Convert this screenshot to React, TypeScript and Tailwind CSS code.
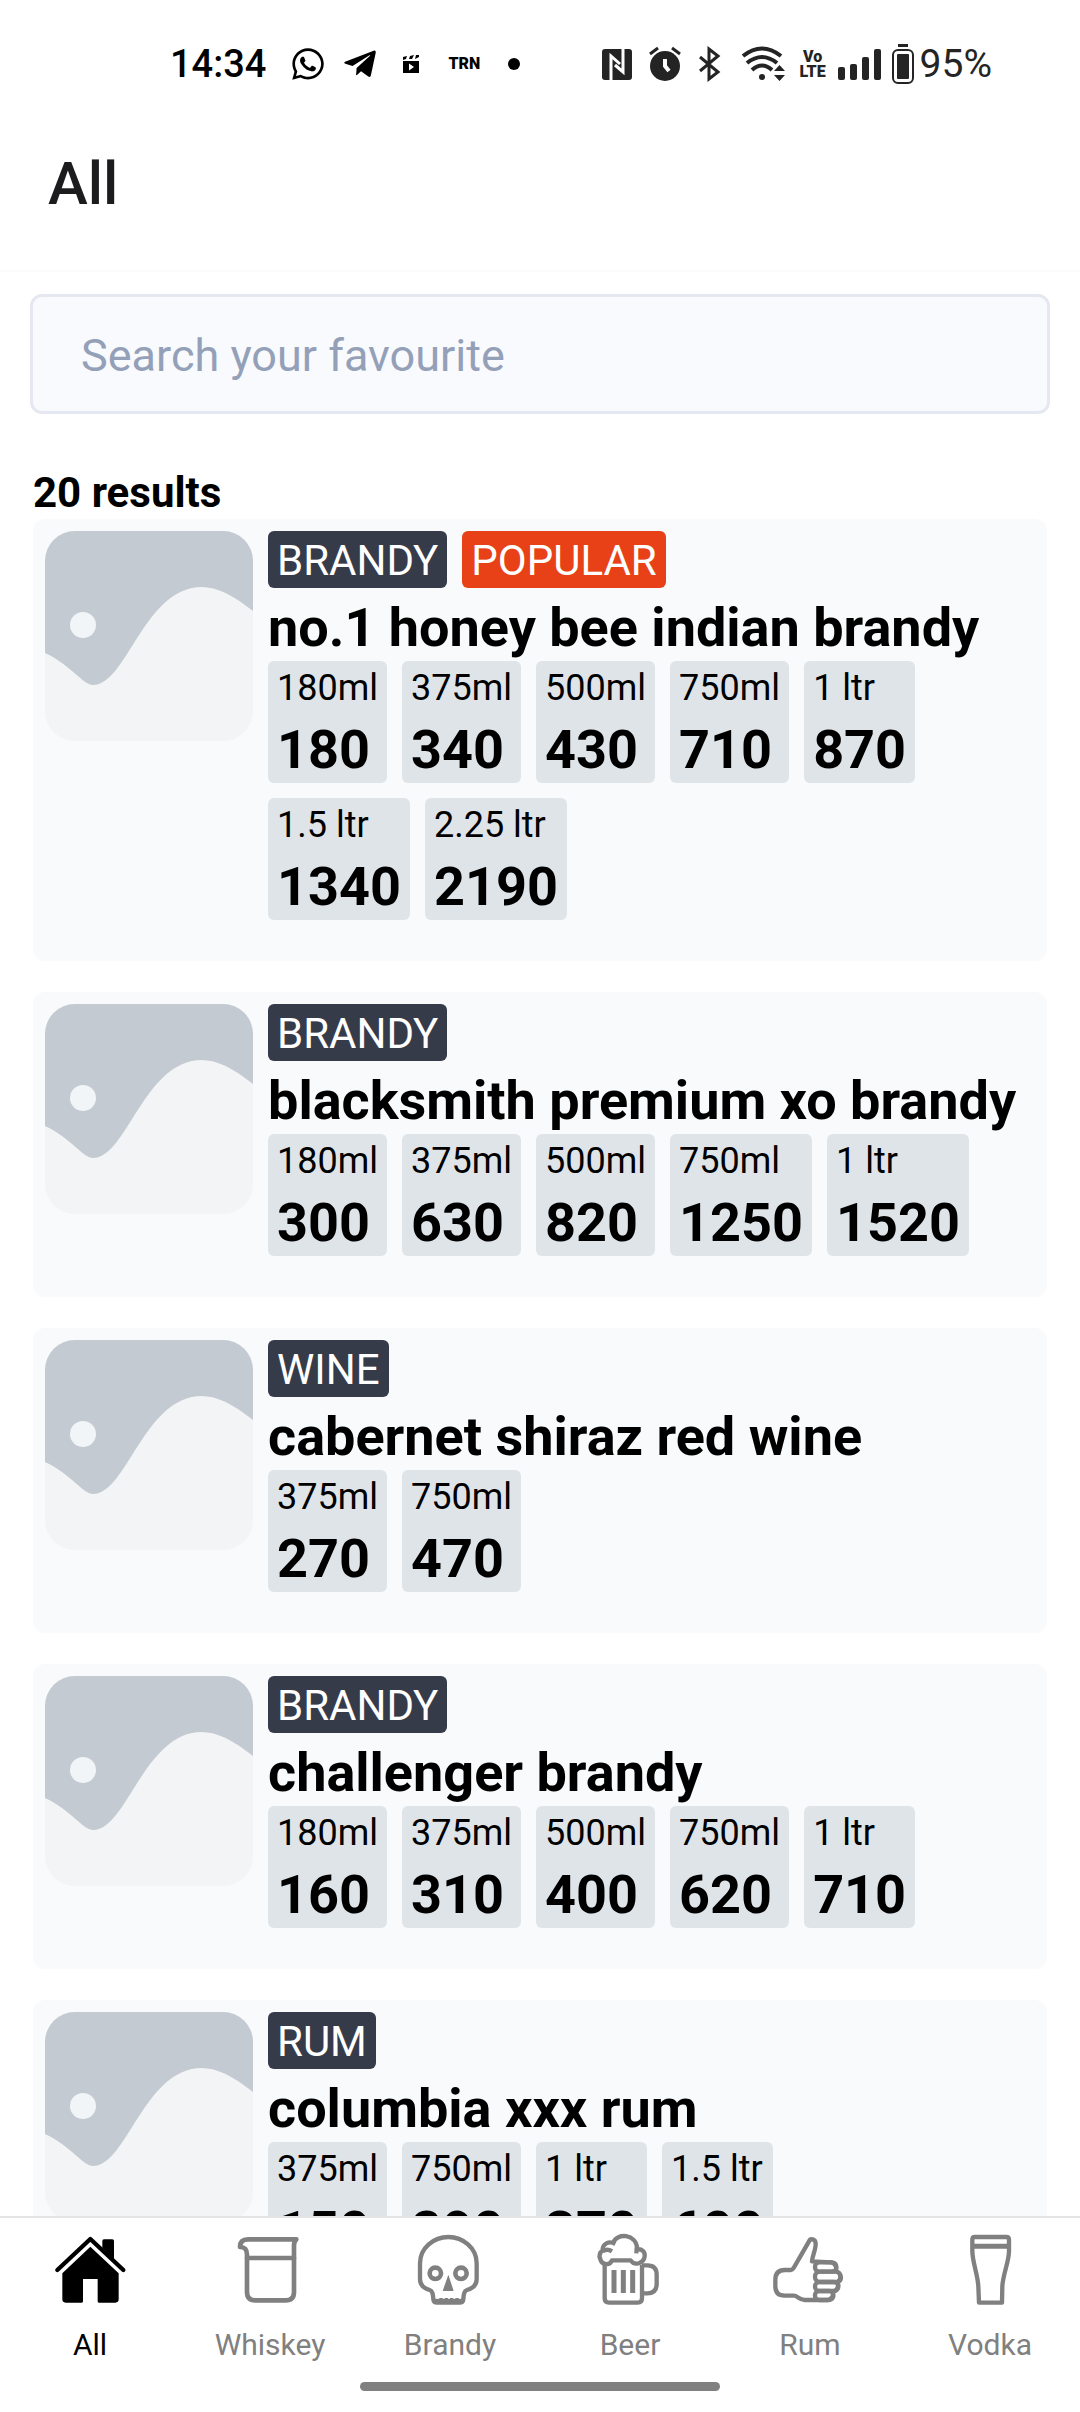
import { FaTelegramPlane, FaWhatsapp } from "react-icons/fa";

type Size = { label: string; price: number };

type Drink = {
  name: string;
  category: string;
  popular?: boolean;
  sizes: Size[];
};

const DRINKS: Drink[] = [
  {
    name: "no.1 honey bee indian brandy",
    category: "BRANDY",
    popular: true,
    sizes: [
      { label: "180ml", price: 180 },
      { label: "375ml", price: 340 },
      { label: "500ml", price: 430 },
      { label: "750ml", price: 710 },
      { label: "1 ltr", price: 870 },
      { label: "1.5 ltr", price: 1340 },
      { label: "2.25 ltr", price: 2190 },
    ],
  },
  {
    name: "blacksmith premium xo brandy",
    category: "BRANDY",
    sizes: [
      { label: "180ml", price: 300 },
      { label: "375ml", price: 630 },
      { label: "500ml", price: 820 },
      { label: "750ml", price: 1250 },
      { label: "1 ltr", price: 1520 },
    ],
  },
  {
    name: "cabernet shiraz red wine",
    category: "WINE",
    sizes: [
      { label: "375ml", price: 270 },
      { label: "750ml", price: 470 },
    ],
  },
  {
    name: "challenger brandy",
    category: "BRANDY",
    sizes: [
      { label: "180ml", price: 160 },
      { label: "375ml", price: 310 },
      { label: "500ml", price: 400 },
      { label: "750ml", price: 620 },
      { label: "1 ltr", price: 710 },
    ],
  },
  {
    name: "columbia xxx rum",
    category: "RUM",
    sizes: [
      { label: "375ml", price: 150 },
      { label: "750ml", price: 290 },
      { label: "1 ltr", price: 370 },
      { label: "1.5 ltr", price: 600 },
    ],
  },
];

function HomeIcon() {
  return (
    <svg viewBox="0 0 240 228" className="h-[76px] w-20" fill="currentColor">
      <path d="M22 114 121 21 220 114" fill="none" stroke="currentColor" strokeWidth="13" strokeLinecap="round" strokeLinejoin="round" />
      <path d="M157 47V27q0-5 5-5h25q5 0 5 5v57Z" />
      <path d="M121 44 206 124V202q0 10-10 10H147q-4 0-4-4V141H99v67q0 4-4 4H47q-10 0-10-10V124Z" />
    </svg>
  );
}

function WhiskeyIcon() {
  return (
    <svg viewBox="0 0 240 228" className="h-[76px] w-20" fill="none" stroke="currentColor" strokeWidth="14" strokeLinejoin="round" strokeLinecap="round">
      <path d="M30 45C30 28 40 22 54 22H199C194 26 192 31 192 40V180Q192 205 167 205H76Q51 205 51 180V68C51 52 45 45 30 45Z" />
      <path d="M51 78H192" />
    </svg>
  );
}

function BrandyIcon() {
  return (
    <svg viewBox="0 0 240 228" className="h-[76px] w-20" fill="none" stroke="currentColor" strokeWidth="13" strokeLinejoin="round">
      <path d="M115 15C71 15 30 48 30 94V141C30 162 45 170 59 174C69 177 69 190 70 202Q71 212 81 212H149Q159 212 160 202C161 190 161 177 171 174C185 170 200 162 200 141V94C200 48 159 15 115 15Z" />
      <circle cx="76" cy="124" r="17" strokeWidth="14" />
      <circle cx="153" cy="124" r="17" strokeWidth="14" />
      <path d="M115 128 131 177H98Z" fill="currentColor" stroke="none" />
      <path d="M74 207H156" />
      <path d="M93 198V211M109 198V211M125 198V211M141 198V211" strokeWidth="10" />
    </svg>
  );
}

function BeerIcon() {
  return (
    <svg viewBox="0 0 240 228" className="h-[76px] w-20" fill="none" stroke="currentColor" strokeWidth="13" strokeLinejoin="round">
      <path d="M44 98V199Q44 212 57 212H143Q156 212 156 199V98" />
      <path d="M156 100H172Q200 100 200 128V156Q200 184 172 184H156" />
      <path d="M72 114V183M100 114V183M128 114V183" strokeWidth="15" />
      <path d="M76 36C57 25 36 35 38 56C28 62 27 72 31 82C36 99 60 102 66 85H122C134 103 161 94 164 73C166 59 155 50 142 52C139 3 80 3 70 31" />
      <path d="M38 58C46 52 57 52 66 58" />
      <path d="M140 47 139 64" />
    </svg>
  );
}

function RumIcon() {
  return (
    <svg viewBox="0 0 240 228" className="h-[76px] w-20" fill="none" stroke="currentColor" strokeWidth="13" strokeLinejoin="round">
      <path d="M130 204H104C88 204 82 191 72 191H44Q16 191 16 163V144Q16 114 44 114H63C68 114 69 111 72 106L117 28C121 18 137 20 137 36C137 54 127 72 126 88L184 91C201 94 200 114 196 116C218 124 216 148 203 150C207 162 202 176 190 178C190 194 184 204 172 204Z" />
      <rect x="135" y="91" width="64" height="28" rx="13" />
      <rect x="135" y="119" width="76" height="31" rx="15" />
      <rect x="135" y="150" width="70" height="27" rx="13" />
      <rect x="135" y="177" width="55" height="27" rx="12" />
    </svg>
  );
}

function VodkaIcon() {
  return (
    <svg viewBox="0 0 240 228" className="h-[76px] w-20" fill="none" stroke="currentColor" strokeWidth="13" strokeLinejoin="round">
      <path d="M74 15H169Q177 15 177 23V58C177 90 159 125 157 163L156 212H87L85 163C83 125 67 90 67 58V23Q67 15 74 15Z" />
      <path d="M67 43H177" strokeWidth="15" />
    </svg>
  );
}

const TABS = [
  { label: "All", Icon: HomeIcon },
  { label: "Whiskey", Icon: WhiskeyIcon },
  { label: "Brandy", Icon: BrandyIcon },
  { label: "Beer", Icon: BeerIcon },
  { label: "Rum", Icon: RumIcon },
  { label: "Vodka", Icon: VodkaIcon },
];

function StatusBar() {
  return (
    <div className="flex h-32 shrink-0 items-center justify-between pl-[170px] pr-[88px] text-[39px] leading-none">
      <div className="flex items-center text-black">
        <span className="text-[38px] font-medium">14:34</span>
        <FaWhatsapp className="ml-6 size-9" />
        <FaTelegramPlane className="ml-4 size-9" />
        <svg viewBox="0 0 18 18" className="ml-6 size-[18px]" fill="currentColor">
          <path d="M1 2 5 1 4 4 1 5ZM8 1l4-1-2 4H7ZM14 0l3-1v3l-4 2Z" />
          <path fillRule="evenodd" d="M1 6H17V18H1ZM7 8.500V15.500L12 12Z" />
        </svg>
        <span className="ml-7 text-[16px] font-black">TRN</span>
        <span className="ml-7 size-3 rounded-full bg-black" />
      </div>

      <div className="flex items-center text-[#242424]">
        <svg viewBox="0 0 30 32" className="h-8 w-[30px]">
          <rect y="1" width="30" height="31" rx="3" fill="currentColor" />
          <path d="M9 32V8L18 16M21 1V24L13 17" fill="none" stroke="#fff" strokeWidth="3" />
        </svg>
        <svg viewBox="0 0 32 36" className="ml-[17px] h-9 w-8" fill="none" stroke="currentColor">
          <circle cx="16" cy="20" r="15" fill="currentColor" stroke="none" />
          <path d="M1 8 9 2M31 8 23 2" strokeWidth="3" />
          <path d="M16 13V20L20 25" stroke="#fff" strokeWidth="4" />
        </svg>
        <svg viewBox="0 0 22 36" className="ml-[18px] h-9 w-[22px]" fill="none" stroke="currentColor" strokeWidth="3">
          <path d="M1 11 19 26 10 33V3L19 10 1 25" />
        </svg>
        <svg viewBox="0 0 44 36" className="ml-5 h-9 w-11" fill="none" stroke="currentColor" strokeWidth="4">
          <path d="M2 10Q21-5 40 10M6 17Q21 5 36 17M11 24Q21 15 31 24" />
          <circle cx="21" cy="31" r="3" fill="currentColor" stroke="none" />
          <path d="M33 25H44L38.500 19ZM33 29H44L38.500 35Z" fill="currentColor" stroke="none" />
        </svg>
        <span className="ml-3.5 flex flex-col items-center text-[16px] font-black leading-[15px]">
          <span>Vo</span>
          <span>LTE</span>
        </span>
        <svg viewBox="0 0 44 32" className="ml-3 h-8 w-11" fill="currentColor">
          <rect y="19" width="7" height="13" rx="2" />
          <rect x="12" y="16" width="7" height="16" rx="2" />
          <rect x="24" y="9" width="7" height="23" rx="2" />
          <rect x="36" y="1" width="7" height="31" rx="2" />
        </svg>
        <svg viewBox="0 0 22 40" className="ml-[10px] h-10 w-[22px]" fill="currentColor">
          <rect x="6" width="10" height="3" />
          <rect x="1" y="6" width="20" height="33" rx="5" fill="none" stroke="currentColor" strokeWidth="2" />
          <rect x="5" y="10" width="12" height="25" rx="1" />
        </svg>
        <span className="ml-1.5">95%</span>
      </div>
    </div>
  );
}

function Placeholder() {
  return (
    <svg viewBox="0 0 208 210" className="h-[210px] w-[208px] shrink-0 rounded-[30px]">
      <rect width="208" height="210" fill="#f2f4f6" />
      <path d="M0 0H208V80C188 64 172 56 157 56C99 56 82 154 48 154C38 154 26 134 0 122Z" fill="#c3cad1" />
      <circle cx="38" cy="94" r="13" fill="#f2f5f8" />
    </svg>
  );
}

function DrinkCard({ drink }: { drink: Drink }) {
  return (
    <li className="flex shrink-0 gap-[15px] rounded-xl bg-[#f8fafb] px-3 pt-3 pb-[41px]">
      <Placeholder />
      <div className="min-w-0 flex-1">
        <div className="flex gap-[15px] text-[42px] leading-[49px] text-white">
          <span className="rounded-md bg-[#363b4a] px-[9px] pt-[5px] pb-[3px]">{drink.category}</span>
          {drink.popular && (
            <span className="rounded-md bg-[#e84118] px-[9px] pt-[5px] pb-[3px]">POPULAR</span>
          )}
        </div>
        <h2 className="mt-2 mb-0.5 text-[54px] leading-[63px] font-bold whitespace-nowrap">{drink.name}</h2>
        <ul className="flex flex-wrap gap-[15px]">
          {drink.sizes.map((size) => (
            <li key={size.label} className="flex flex-col gap-[9px] rounded-md bg-[#dfe4e9] px-[9px] pt-1.5 pb-0.5">
              <span className="text-[36px] leading-[42px]">{size.label}</span>
              <span className="text-[54px] leading-[63px] font-bold">{size.price}</span>
            </li>
          ))}
        </ul>
      </div>
    </li>
  );
}

export default function App() {
  return (
    <div className="flex h-screen flex-col bg-white font-['Roboto',sans-serif] text-black">
      <StatusBar />

      <header className="shrink-0 border-b-2 border-[#fbfbfb] px-12 pt-[21px] pb-[51px]">
        <h1 className="text-[60px] leading-[70px] font-medium text-[#1c1c1e]">All</h1>
      </header>

      <main className="flex min-h-0 flex-1 flex-col overflow-hidden px-[33px] pt-[22px]">
        <input
          type="search"
          aria-label="Search your favourite"
          placeholder="Search your favourite"
          className="-mx-[3px] h-[120px] shrink-0 rounded-xl border-[3px] border-[#e5e8f0] bg-[#f8fafd] px-12 pt-0.5 text-[45px] placeholder:text-[#94a0b8]"
        />
        <p className="mt-[53px] mb-px shrink-0 text-[42px] leading-[51px] font-bold">20 results</p>
        <ul className="flex flex-col gap-[31px]">
          {DRINKS.map((drink) => (
            <DrinkCard key={drink.name} drink={drink} />
          ))}
        </ul>
      </main>

      <nav className="relative flex h-[196px] shrink-0 border-t-2 border-[#e4e4e4] bg-white">
        {TABS.map(({ label, Icon }, index) => (
          <a
            key={label}
            href="#"
            className={`flex flex-1 flex-col items-center gap-[19px] pt-3.5 text-[30px] leading-9 ${
              index === 0 ? "text-black" : "text-[#808080]"
            }`}
          >
            <Icon />
            <span>{label}</span>
          </a>
        ))}
        <span className="absolute bottom-[21px] left-1/3 h-[9px] w-1/3 rounded-full bg-[#808080]" />
      </nav>
    </div>
  );
}
